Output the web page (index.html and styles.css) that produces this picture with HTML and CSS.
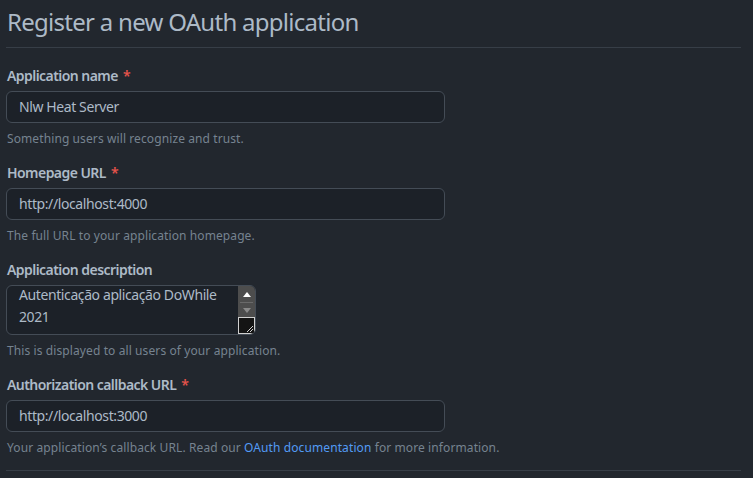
FILE: index.html
```html
<!DOCTYPE html>
<html lang="en">
<head>
<meta charset="utf-8">
<title>Register a new OAuth application</title>
<link rel="stylesheet" href="styles.css">
</head>
<body>
<div class="page">
  <h1 class="title">Register a new OAuth application</h1>
  <form class="form">
    <div class="group">
      <label class="label">Application name <span class="req">*</span></label>
      <div class="input">Nlw Heat Server</div>
      <p class="note">Something users will recognize and trust.</p>
    </div>
    <div class="group">
      <label class="label">Homepage URL <span class="req">*</span></label>
      <div class="input">http://localhost:4000</div>
      <p class="note">The full URL to your application homepage.</p>
    </div>
    <div class="group">
      <label class="label">Application description</label>
      <div class="textarea">
        <div class="ta-text">Autenticação aplicação DoWhile 2021</div>
        <div class="scrollbar">
          <div class="sb-track">
            <span class="arrow up"></span>
            <span class="sb-sep"></span>
            <span class="arrow down"></span>
          </div>
          <div class="resizer">
            <svg width="10" height="10" viewBox="0 0 10 10"><path d="M9 3 L3 9 M9 6 L6 9" stroke="#d0d0d0" stroke-width="1" fill="none"/></svg>
          </div>
        </div>
      </div>
      <p class="note">This is displayed to all users of your application.</p>
    </div>
    <div class="group">
      <label class="label">Authorization callback URL <span class="req">*</span></label>
      <div class="input">http://localhost:3000</div>
      <p class="note">Your application’s callback URL. Read our <a class="link" href="#">OAuth documentation</a> for more information.</p>
    </div>
  </form>
  <hr class="rule">
</div>
</body>
</html>
```
FILE: styles.css
```css
html, body {
  margin: 0;
  padding: 0;
  background: #22272e;
}
body {
  font-family: "Noto Sans", "Open Sans", sans-serif;
  color: #adbac7;
  font-size: 14px;
}
.page {
  width: 735px;
  padding: 0 6px;
}
.title {
  margin: 0;
  font-size: 24px;
  font-weight: 400;
  line-height: 32px;
  letter-spacing: -0.72px;
  padding: 6px 0 9px 1px;
  border-bottom: 1px solid #373e47;
  color: #adbac7;
}
.form {
  display: flex;
  flex-direction: column;
  padding-top: 18px;
  gap: 15px;
}
.group {
  display: flex;
  flex-direction: column;
}
.label {
  font-weight: 600;
  font-size: 14px;
  line-height: 20px;
  letter-spacing: -0.55px;
  padding-left: 1px;
  margin-bottom: 5px;
}
.req {
  color: #e5534b;
  margin-left: 2px;
}
.input {
  width: 439px;
  height: 32px;
  box-sizing: border-box;
  background: #1c2128;
  border: 1px solid #444c56;
  border-radius: 6px;
  padding: 0 12px;
  line-height: 30px;
  font-size: 14px;
  letter-spacing: -0.4px;
  color: #adbac7;
}
.textarea {
  width: 250px;
  height: 50px;
  box-sizing: border-box;
  background: #1c2128;
  border: 1px solid #444c56;
  border-radius: 6px;
  display: flex;
  overflow: hidden;
}
.ta-text {
  flex: 1;
  padding: 0 6px 0 12px;
  line-height: 22px;
  font-size: 14px;
  letter-spacing: -0.4px;
  margin-top: -2px;
}
.scrollbar {
  width: 17px;
  display: flex;
  flex-direction: column;
}
.sb-track {
  flex: 1;
  background: #4d4d4d;
  display: flex;
  flex-direction: column;
  align-items: center;
  padding-top: 6px;
}
.arrow {
  width: 0;
  height: 0;
  border-left: 4px solid transparent;
  border-right: 4px solid transparent;
}
.arrow.up {
  border-bottom: 5px solid #ffffff;
}
.arrow.down {
  border-top: 5px solid #8a8a8a;
}
.sb-sep {
  width: 13px;
  height: 1px;
  background: #6a6a6a;
  margin: 5px 0 5px;
}
.resizer {
  height: 17px;
  box-sizing: border-box;
  background: #141414;
  border: 1px solid #d0d0d0;
  display: flex;
  align-items: flex-end;
  justify-content: flex-end;
}
.note {
  margin: 7px 0 0;
  font-size: 12px;
  line-height: 18px;
  letter-spacing: 0.1px;
  color: #768390;
  padding-left: 1px;
}
.link {
  color: #539bf5;
  text-decoration: none;
}
.rule {
  margin: 13px 0 0;
  border: 0;
  border-top: 1px solid #373e47;
}
```
